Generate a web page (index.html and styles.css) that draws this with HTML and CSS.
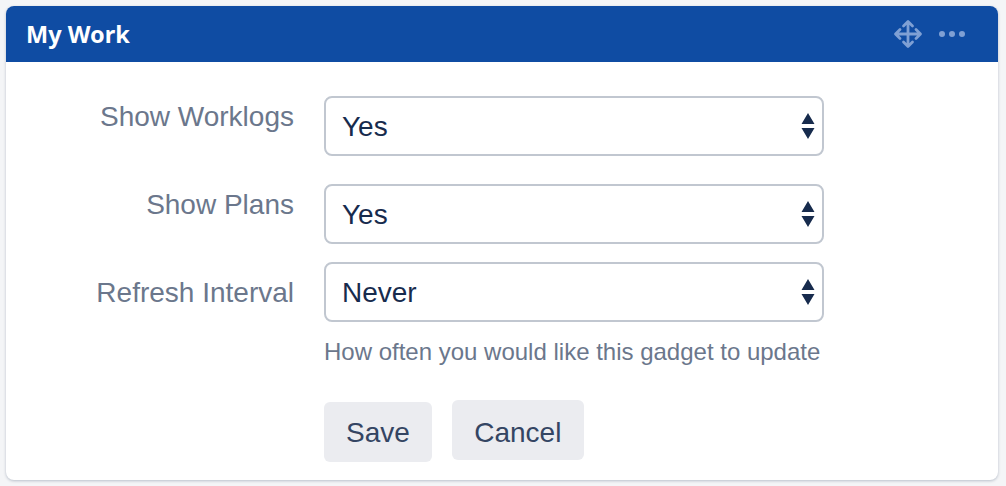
FILE: index.html
```html
<!DOCTYPE html>
<html lang="en">
<head>
    <meta charset="UTF-8">
    <title>My Work</title>
    <link rel="stylesheet" href="styles.css">
</head>
<body>
    <div class="gadget">
        <div class="gadget-header">
            <h1>My Work</h1>
            <div class="gadget-tools">
                <svg class="move-icon" width="30" height="30" viewBox="0 0 30 30">
                    <path d="M15 3v24M3 15h24M10.500 7l4.500-4.500 4.500 4.500M10.500 23l4.500 4.500 4.500-4.500M7 10.500l-4.500 4.500 4.500 4.500M23 10.500l4.500 4.500-4.500 4.500"/>
                </svg>
                <svg class="more-icon" width="28" height="8" viewBox="0 0 28 8">
                    <circle cx="4" cy="4" r="3"/>
                    <circle cx="14" cy="4" r="3"/>
                    <circle cx="24" cy="4" r="3"/>
                </svg>
            </div>
        </div>

        <form class="gadget-form">
            <div class="field-row">
                <label class="field-label">Show Worklogs</label>
                <div class="select-wrap">
                    <select class="field-select"><option>Yes</option><option>No</option></select>
                    <svg class="select-arrows" width="14" height="26" viewBox="0 0 14 26"><path d="M7 0l6.500 11h-13zM.5 15h13l-6.500 11z"/></svg>
                </div>
            </div>
            <div class="field-row plans">
                <label class="field-label">Show Plans</label>
                <div class="select-wrap">
                    <select class="field-select"><option>Yes</option><option>No</option></select>
                    <svg class="select-arrows" width="14" height="26" viewBox="0 0 14 26"><path d="M7 0l6.500 11h-13zM.5 15h13l-6.500 11z"/></svg>
                </div>
            </div>
            <div class="field-row refresh">
                <label class="field-label">Refresh Interval</label>
                <div class="select-wrap">
                    <select class="field-select"><option>Never</option><option>Hourly</option></select>
                    <svg class="select-arrows" width="14" height="26" viewBox="0 0 14 26"><path d="M7 0l6.500 11h-13zM.5 15h13l-6.500 11z"/></svg>
                </div>
            </div>
            <p class="field-hint">How often you would like this gadget to update</p>
            <div class="form-buttons">
                <button type="button" class="btn btn-save">Save</button>
                <button type="button" class="btn btn-cancel">Cancel</button>
            </div>
        </form>
    </div>
</body>
</html>
```

FILE: styles.css
```css
* {
    margin: 0;
    padding: 0;
    box-sizing: border-box;
}

body {
    width: 1006px;
    height: 486px;
    overflow: hidden;
    padding: 6px 8px 6px 6px;
    background: #f4f5f7;
    font-family: "Liberation Sans", Arial, sans-serif;
}

.gadget {
    height: 474px;
    background: #fff;
    border-radius: 8px;
    box-shadow: 0 1px 3px rgba(9, 30, 66, 0.25);
    overflow: hidden;
}

.gadget-header {
    height: 56px;
    background: #0f4ca3;
    display: flex;
    align-items: center;
    justify-content: space-between;
    padding: 0 32px 0 20px;
}

.gadget-header h1 {
    font-family: "Noto Sans", sans-serif;
    font-size: 23.500px;
    font-weight: 700;
    color: #fff;
}

.gadget-tools {
    display: flex;
    align-items: center;
    gap: 15px;
}

.more-icon {
    fill: #7fa0d4;
}

.move-icon {
    fill: none;
    stroke: #7fa0d4;
    stroke-width: 2.800;
    stroke-linecap: round;
    stroke-linejoin: round;
}

.gadget-form {
    padding-top: 34px;
}

.field-row {
    display: flex;
    gap: 30px;
    margin-bottom: 28px;
}

.field-row.plans {
    margin-bottom: 18px;
}

.field-row.refresh {
    margin-bottom: 0;
}

.field-label {
    width: 288px;
    text-align: right;
    font-size: 28px;
    line-height: 42px;
    color: #6b778c;
}

.refresh .field-label {
    padding-top: 10px;
}

.select-wrap {
    position: relative;
    width: 500px;
    height: 60px;
}

.field-select {
    appearance: none;
    width: 100%;
    height: 100%;
    padding: 0 40px 0 16px;
    background: #fff;
    border: 2px solid #c1c7d0;
    border-radius: 8px;
    font-family: inherit;
    font-size: 28px;
    color: #172b4d;
}

.select-arrows {
    position: absolute;
    top: 17px;
    right: 9px;
    fill: #172b4d;
}

.field-hint {
    margin: 16px 0 0 318px;
    font-size: 24px;
    line-height: 28px;
    color: #6b778c;
}

.form-buttons {
    display: flex;
    align-items: flex-start;
    gap: 20px;
    margin: 34px 0 0 318px;
}

.btn {
    height: 60px;
    padding: 0 22px;
    background: #ebecf0;
    border: none;
    border-radius: 6px;
    font-family: inherit;
    font-size: 28px;
    color: #344563;
}

.btn-save {
    margin-top: 2px;
    padding-top: 2px;
}

.btn-cancel {
    width: 132px;
    padding-top: 6px;
}
```
